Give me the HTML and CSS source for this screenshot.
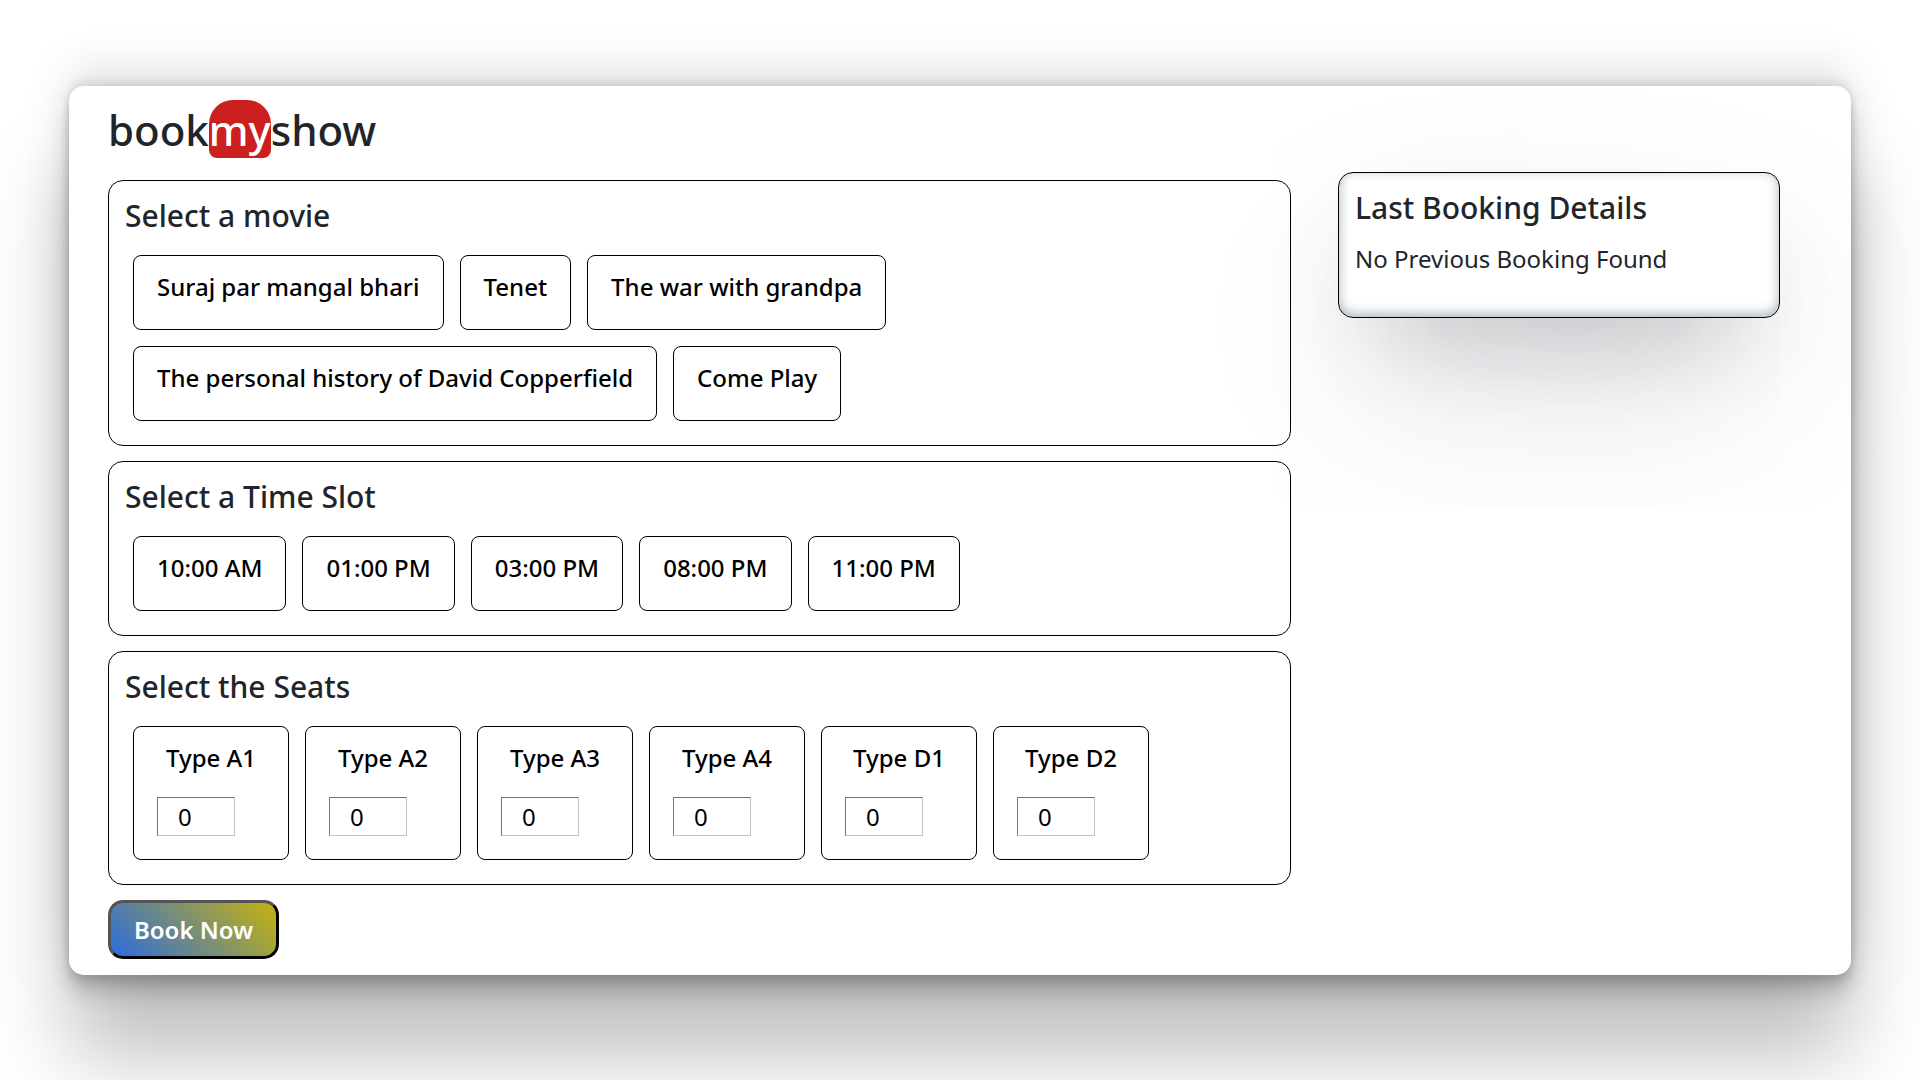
FILE: index.html
```
<!DOCTYPE html>
<html lang="en">
<head>
  <meta charset="utf-8">
  <meta name="viewport" content="width=device-width, initial-scale=1">
  <title>bookmyshow</title>
  <link rel="stylesheet" href="styles.css">
</head>
<body>
  <main class="card">
    <h1 class="logo">book<span class="logo-my">my</span>show</h1>
    <div class="layout">
      <form class="booking">
        <section class="panel">
          <h2 class="title">Select a movie</h2>
          <div class="options">
            <button type="button" class="option">Suraj par mangal bhari</button>
            <button type="button" class="option">Tenet</button>
            <button type="button" class="option">The war with grandpa</button>
            <button type="button" class="option">The personal history of David Copperfield</button>
            <button type="button" class="option">Come Play</button>
          </div>
        </section>
        <section class="panel">
          <h2 class="title">Select a Time Slot</h2>
          <div class="options">
            <button type="button" class="option">10:00 AM</button>
            <button type="button" class="option">01:00 PM</button>
            <button type="button" class="option">03:00 PM</button>
            <button type="button" class="option">08:00 PM</button>
            <button type="button" class="option">11:00 PM</button>
          </div>
        </section>
        <section class="panel">
          <h2 class="title">Select the Seats</h2>
          <div class="options">
            <div class="option seat"><label for="a1">Type A1</label><input class="count" id="a1" type="text" inputmode="numeric" value="0"></div>
            <div class="option seat"><label for="a2">Type A2</label><input class="count" id="a2" type="text" inputmode="numeric" value="0"></div>
            <div class="option seat"><label for="a3">Type A3</label><input class="count" id="a3" type="text" inputmode="numeric" value="0"></div>
            <div class="option seat"><label for="a4">Type A4</label><input class="count" id="a4" type="text" inputmode="numeric" value="0"></div>
            <div class="option seat"><label for="d1">Type D1</label><input class="count" id="d1" type="text" inputmode="numeric" value="0"></div>
            <div class="option seat"><label for="d2">Type D2</label><input class="count" id="d2" type="text" inputmode="numeric" value="0"></div>
          </div>
        </section>
        <button type="submit" class="book">Book Now</button>
      </form>
      <aside class="last">
        <h2 class="title">Last Booking Details</h2>
        <p class="last-text">No Previous Booking Found</p>
      </aside>
    </div>
  </main>
</body>
</html>
```
FILE: styles.css
```
* {
  box-sizing: border-box;
}

body {
  min-height: 100vh;
  margin: 0;
  padding: 86px 69px 104px;
  background: #fff;
  color: #212529;
  font-family: "Segoe UI", "Noto Sans", sans-serif;
  font-size: 24px;
  line-height: 36px;
}

h1, h2, p {
  margin: 0;
}

.card {
  padding: 12px 39px 16px;
  border-radius: 15px;
  background: #fff;
  box-shadow:
    rgba(0, 0, 0, 0.25) 0 81px 83px,
    rgba(0, 0, 0, 0.12) 0 -18px 45px,
    rgba(0, 0, 0, 0.12) 0 6px 9px,
    rgba(0, 0, 0, 0.17) 0 18px 20px,
    rgba(0, 0, 0, 0.09) 0 -5px 8px;
}

.logo {
  height: 74px;
  font-size: 42px;
  font-weight: 500;
  line-height: 64px;
}

.logo-my {
  padding-top: 1px;
  border-radius: 24px 24px 8px 8px;
  background: #cc1f1f;
  color: #fff;
}

.layout {
  display: grid;
  grid-template-columns: 1183fr 442fr;
  gap: 47px;
  align-items: start;
  padding-right: 32px;
}

.booking {
  display: flex;
  flex-direction: column;
  gap: 15px;
  padding-top: 8px;
}

.panel,
.last {
  padding: 16px;
  border: 1px solid #000;
  border-radius: 15px;
}

.title {
  font-size: 30px;
  font-weight: 500;
  line-height: 38px;
}

.options {
  display: flex;
  flex-wrap: wrap;
  gap: 16px;
  padding: 20px 8px 8px;
}

.option {
  padding: 13px 23px 24px;
  border: 1px solid #000;
  border-radius: 8px;
  background: #fff;
  color: #000;
  font: inherit;
  font-weight: 500;
}

.seat {
  display: flex;
  flex-direction: column;
  gap: 21px;
  width: 156px;
  padding-bottom: 23px;
  text-align: center;
}

.count {
  width: 78px;
  height: 39px;
  padding: 0 20px;
  border: 1px solid;
  border-color: #767676 #c3c3c3 #c3c3c3 #767676;
  background: #fff;
  color: #000;
  font: inherit;
  font-weight: 400;
}

.book {
  align-self: flex-start;
  padding: 9px 23px 8px;
  border: 3px outset #000;
  border-radius: 15px;
  background: linear-gradient(45deg, #2d6cdf, #c6b20c);
  color: #fff;
  font: inherit;
  font-weight: 600;
}

.last {
  min-height: 146px;
  box-shadow:
    rgba(50, 50, 93, 0.25) 0 75px 180px -30px,
    rgba(0, 0, 0, 0.3) 0 45px 100px -45px,
    rgba(10, 37, 64, 0.35) 0 -3px 12px 0 inset;
}

.last-text {
  margin-top: 14px;
}
```
